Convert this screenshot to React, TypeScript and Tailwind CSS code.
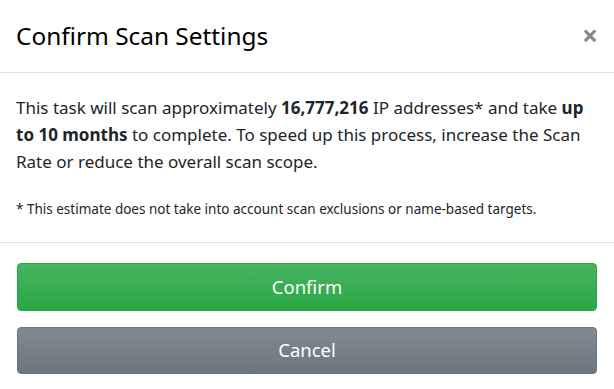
export default function App() {
  return (
    <div
      className="w-[614px] h-[389px] bg-white text-[#212529] overflow-hidden"
      style={{ fontFamily: '"Noto Sans", "Open Sans", sans-serif' }}
    >
      {/* Header */}
      <div className="flex items-center justify-between h-[73px] px-4 border-b border-[#dee2e6]">
        <h5 className="text-[24.4px] leading-[36px] font-normal text-black">Confirm Scan Settings</h5>
        <button className="text-[28px] leading-none font-bold text-[#888] mr-0 mb-[3px]">×</button>
      </div>

      {/* Body */}
      <div className="px-4 pt-[21px] h-[170px] border-b border-[#dee2e6]">
        <p className="text-[17px] leading-[27px]">
          This task will scan approximately <b>16,777,216</b> IP addresses* and take{' '}
          <b>up to 10 months</b> to complete. To speed up this process, increase the Scan Rate or
          reduce the overall scan scope.
        </p>
        <p className="text-[13.5px] leading-[20px] mt-[24px]">
          * This estimate does not take into account scan exclusions or name-based targets.
        </p>
      </div>

      {/* Footer */}
      <div className="flex flex-col gap-[16px] px-[17px] pt-[20px]">
        <button className="h-[48px] w-full rounded-[4px] border border-[#28a745] bg-gradient-to-b from-[#48b461] to-[#28a745] text-white text-[18.5px] leading-none">
          Confirm
        </button>
        <button className="h-[47px] w-full rounded-[4px] border border-[#6c757d] bg-gradient-to-b from-[#828a91] to-[#6c757d] text-white text-[18.5px] leading-none">
          Cancel
        </button>
      </div>
    </div>
  )
}
